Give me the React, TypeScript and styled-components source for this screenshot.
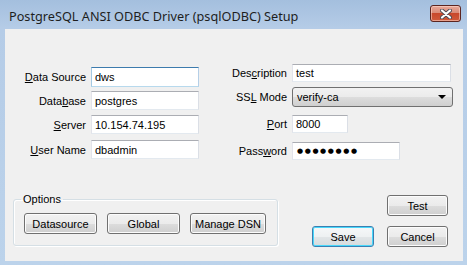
import styled, { createGlobalStyle } from "styled-components";

const GlobalStyle = createGlobalStyle`
  html, body {
    margin: 0;
    padding: 0;
    background: #ffffff;
  }
  * {
    box-sizing: border-box;
  }
`;

const Window = styled.div`
  width: 467px;
  height: 265px;
  display: flex;
  flex-direction: column;
  padding: 0 4px 4px 5px;
  background: linear-gradient(to bottom, #a4bfde 0px, #b5cce7 28px, #bcd3eb 100%);
  font-family: "Liberation Sans", Arial, sans-serif;
  font-size: 11px;
  color: #000000;
`;

const TitleBar = styled.div`
  height: 29px;
  display: flex;
  align-items: center;
  justify-content: space-between;
  padding: 2px 2px 0 4px;
`;

const Title = styled.span`
  font-family: "Noto Sans", "Open Sans", sans-serif;
  font-size: 12.7px;
  color: #1e1e1e;
`;

const CloseButton = styled.div`
  width: 31px;
  height: 17px;
  margin-top: -4px;
  border: 1px solid #5c2520;
  border-radius: 3px;
  display: flex;
  align-items: center;
  justify-content: center;
  background: linear-gradient(to bottom, #e9a99a 0%, #d98b78 45%, #c8482c 50%, #cf5a3c 100%);
  box-shadow: inset 0 0 0 1px rgba(255, 220, 210, 0.55);
`;

const Client = styled.div`
  flex: 1;
  background: #f0f0f0;
  display: flex;
  flex-direction: column;
`;

const Fields = styled.div`
  display: flex;
  align-items: flex-start;
`;

const Column = styled.div<{ $top: number; $left: number }>`
  display: flex;
  flex-direction: column;
  padding-top: ${(p) => p.$top}px;
  margin-left: ${(p) => p.$left}px;
`;

const Row = styled.div<{ $mt?: number }>`
  display: flex;
  align-items: center;
  margin-top: ${(p) => p.$mt ?? 0}px;
`;

const Label = styled.label<{ $w: number }>`
  width: ${(p) => p.$w}px;
  padding-right: 5px;
  text-align: right;
  white-space: nowrap;
`;

const TextBox = styled.div<{ $w: number; $h?: number; $focused?: boolean }>`
  width: ${(p) => p.$w}px;
  height: ${(p) => p.$h ?? 19}px;
  background: #ffffff;
  border: 1px solid;
  border-color: ${(p) =>
    p.$focused
      ? "#3d7bad #b5cfe7 #b7d9ed #a4c9e3"
      : "#abadb3 #dbdfe6 #e3e9ef #e2e3ea"};
  padding-left: 3px;
  display: flex;
  align-items: center;
  white-space: nowrap;
  overflow: hidden;
`;

const Dots = styled.span`
  font-family: "DejaVu Sans", sans-serif;
  font-size: 7px;
  letter-spacing: 1.6px;
  padding-left: 1px;
`;

const Combo = styled.div<{ $w: number }>`
  width: ${(p) => p.$w}px;
  height: 20px;
  border: 1px solid #707070;
  border-radius: 3px;
  background: linear-gradient(to bottom, #f2f2f2 0%, #ebebeb 50%, #dddddd 51%, #cfcfcf 100%);
  display: flex;
  align-items: center;
  justify-content: space-between;
  padding: 0 6px 0 4px;
`;

const Arrow = styled.span`
  width: 0;
  height: 0;
  border-left: 4px solid transparent;
  border-right: 4px solid transparent;
  border-top: 4px solid #000000;
`;

const Bottom = styled.div`
  display: flex;
  align-items: flex-start;
  margin-top: 33px;
  padding-left: 8px;
`;

const GroupBox = styled.fieldset`
  width: 265px;
  margin: 0;
  padding: 7px 10px 11px 10px;
  border: 1px solid #d5dfe5;
  border-radius: 3px;
  box-shadow: inset 1px 1px 0 #ffffff, 1px 1px 0 #ffffff;
  display: flex;
  gap: 10px;
`;

const Legend = styled.legend`
  padding: 0 2px;
  margin-left: -3px;
  line-height: 13px;
`;

const Button = styled.button<{ $w: number; $default?: boolean }>`
  width: ${(p) => p.$w}px;
  height: 21px;
  margin: 0;
  padding: 0;
  font-family: "Liberation Sans", Arial, sans-serif;
  font-size: 11px;
  color: #000000;
  border: 1px solid ${(p) => (p.$default ? "#3c7fb1" : "#707070")};
  border-radius: 3px;
  background: ${(p) =>
    p.$default
      ? "linear-gradient(to bottom, #f6f8f9 0%, #eef1f2 50%, #e2e6e8 51%, #d6dbdd 100%)"
      : "linear-gradient(to bottom, #f2f2f2 0%, #ebebeb 50%, #dddddd 51%, #cfcfcf 100%)"};
  box-shadow: ${(p) =>
    p.$default ? "inset 0 0 0 1px #48d8fb" : "inset 0 0 0 1px #fcfcfc"};
`;

const Actions = styled.div`
  display: grid;
  grid-template-columns: 62px 61px;
  column-gap: 13px;
  row-gap: 10px;
  margin-left: 34px;
  margin-top: 2px;
`;

const Spacer = styled.div``;

function CloseIcon() {
  return (
    <svg width="12" height="10" viewBox="0 0 12 10">
      <path d="M2 1.5 L10 8.5 M10 1.5 L2 8.5" stroke="#4a4a55" strokeWidth="4" strokeLinecap="round" />
      <path d="M2 1.5 L10 8.5 M10 1.5 L2 8.5" stroke="#ffffff" strokeWidth="2.2" strokeLinecap="round" />
    </svg>
  );
}

export default function App() {
  return (
    <>
      <GlobalStyle />
      <Window>
        <TitleBar>
          <Title>PostgreSQL ANSI ODBC Driver (psqlODBC) Setup</Title>
          <CloseButton>
            <CloseIcon />
          </CloseButton>
        </TitleBar>
        <Client>
          <Fields>
            <Column $top={38} $left={0}>
              <Row>
                <Label $w={86}><u>D</u>ata Source</Label>
                <TextBox $w={108} $h={20} $focused>dws</TextBox>
              </Row>
              <Row $mt={4}>
                <Label $w={86}>Data<u>b</u>ase</Label>
                <TextBox $w={108}>postgres</TextBox>
              </Row>
              <Row $mt={5}>
                <Label $w={86}><u>S</u>erver</Label>
                <TextBox $w={108}>10.154.74.195</TextBox>
              </Row>
              <Row $mt={6}>
                <Label $w={86}><u>U</u>ser Name</Label>
                <TextBox $w={108}>dbadmin</TextBox>
              </Row>
            </Column>
            <Column $top={35} $left={6}>
              <Row>
                <Label $w={87}>Des<u>c</u>ription</Label>
                <TextBox $w={159} $h={18}>test</TextBox>
              </Row>
              <Row $mt={5}>
                <Label $w={87}>SS<u>L</u> Mode</Label>
                <Combo $w={161}>
                  <span>verify-ca</span>
                  <Arrow />
                </Combo>
              </Row>
              <Row $mt={8}>
                <Label $w={87}><u>P</u>ort</Label>
                <TextBox $w={56} $h={18}>8000</TextBox>
              </Row>
              <Row $mt={9}>
                <Label $w={87}>Pass<u>w</u>ord</Label>
                <TextBox $w={108} $h={18}>
                  <Dots>●●●●●●●●</Dots>
                </TextBox>
              </Row>
            </Column>
          </Fields>
          <Bottom>
            <GroupBox>
              <Legend>Options</Legend>
              <Button $w={73}>Datasource</Button>
              <Button $w={73}>Global</Button>
              <Button $w={76}>Manage DSN</Button>
            </GroupBox>
            <Actions>
              <Spacer />
              <Button $w={61}>Test</Button>
              <Button $w={62} $default>Save</Button>
              <Button $w={61}>Cancel</Button>
            </Actions>
          </Bottom>
        </Client>
      </Window>
    </>
  );
}
